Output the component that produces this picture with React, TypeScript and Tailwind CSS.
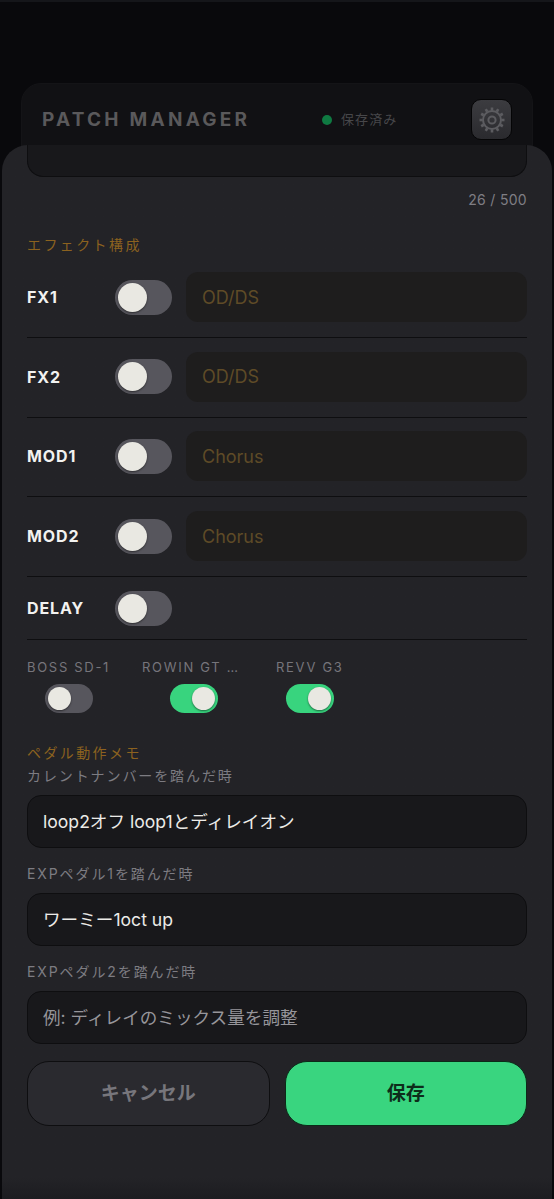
import React from 'react';

const FONT = "font-['Inter','Noto_Sans_CJK_JP',sans-serif]";

const Toggle = ({ on = false, small = false }: { on?: boolean; small?: boolean }) => (
  <div
    className={`flex items-center rounded-full ${small ? 'h-[29px] w-[48px] px-[3px]' : 'h-[35px] w-[57px] px-[3px]'} ${
      on ? 'justify-end bg-[#38d47e]' : 'justify-start bg-[#57565d]'
    }`}
  >
    <div
      className={`rounded-full bg-[#e9e8e2] shadow-[0_1px_2px_rgba(0,0,0,0.5)] ${small ? 'h-[23px] w-[23px]' : 'h-[29px] w-[29px]'}`}
    />
  </div>
);

const FxRow = ({ label, placeholder }: { label: string; placeholder: string }) => (
  <div className="mb-[13.7px] flex items-center border-b border-[#0e0e10] pb-[15px]">
    <span className="w-[88px] text-[16px] font-bold tracking-[0.9px] text-[#f2f2f0]">{label}</span>
    <Toggle />
    <div className="ml-[14px] flex h-[50px] flex-1 items-center rounded-[12px] bg-[#1e1d1d] px-[16px] text-[18px] text-[#5f4b27]">
      {placeholder}
    </div>
  </div>
);

const Pedal = ({ label, on, className }: { label: string; on?: boolean; className: string }) => (
  <div className={`flex flex-col items-center gap-[7px] ${className}`}>
    <span className="w-full whitespace-nowrap text-[13px] leading-[20px] tracking-[1.7px] text-[#76757b]">{label}</span>
    <Toggle small on={on} />
  </div>
);

const Memo = ({ label, value, muted }: { label: string; value: string; muted?: boolean }) => (
  <div className="flex flex-col">
    <span className="text-[14px] leading-[20px] tracking-[1.9px] text-[#7d7c82]">{label}</span>
    <div
      className={`mt-[9px] flex h-[53px] items-center rounded-[14px] border border-[#0e0e10] bg-[#18181b] px-[15px] text-[17.6px] ${
        muted ? 'text-[#96959a]' : 'text-[#ecebe8]'
      }`}
    >
      {value}
    </div>
  </div>
);

const TEETH = [0, 30, 60, 90, 120, 150, 180, 210, 240, 270, 300, 330];

const Gear = () => (
  <svg width="30" height="30" viewBox="0 0 30 30" fill="none" stroke="#5c5c60">
    <circle cx="15" cy="15" r="9" strokeWidth="2" />
    <circle cx="15" cy="15" r="3.6" strokeWidth="2" />
    {TEETH.map((deg) => (
      <line key={deg} x1="15" y1="5.5" x2="15" y2="2.5" strokeWidth="2.6" transform={`rotate(${deg} 15 15)`} />
    ))}
  </svg>
);

export default function App() {
  return (
    <div className={`relative h-[1199px] w-[554px] overflow-hidden bg-[#09090c] ${FONT}`}>
      <div className="h-[2px] bg-[#15161a]" />

      <div className="mx-[21px] mt-[81px] flex h-[100px] items-start rounded-[20px] border border-[#141417] bg-[#111114] pl-[20px] pr-[20px] pt-[15px]">
        <div className="flex h-[41px] flex-1 items-center">
          <span className="w-[280px] pt-[2px] text-[19px] font-bold tracking-[3.25px] text-[#5a595b]">PATCH MANAGER</span>
          <span className="h-[10px] w-[10px] rounded-full bg-[#0f7a42]" />
          <span className="ml-[9px] text-[13px] tracking-[1.1px] text-[#47474a]">保存済み</span>
        </div>
        <div className="flex h-[41px] w-[41px] items-center justify-center rounded-[10px] border border-[#050506] bg-gradient-to-b from-[#3c3c40] to-[#2a2a2e]">
          <Gear />
        </div>
      </div>

      {/* bottom sheet over the header */}
      <div className="absolute bottom-0 left-[2px] right-[2px] top-[145px] rounded-t-[26px] bg-gradient-to-b from-[#232327] from-[98%] to-[#1c1c20] px-[25px]">
        <div className="h-[32px] rounded-b-[16px] border border-t-0 border-[#0e0e10] bg-[#18181b]" />
        <div className="mt-[14px] text-right text-[14px] leading-[18px] tracking-[0.3px] text-[#7f7e84]">26 / 500</div>

        <div className="mt-[26px] text-[14px] leading-[20px] tracking-[2.4px] text-[#8c621f]">エフェクト構成</div>

        <div className="mt-[17px] flex flex-col">
          <FxRow label="FX1" placeholder="OD/DS" />
          <FxRow label="FX2" placeholder="OD/DS" />
          <FxRow label="MOD1" placeholder="Chorus" />
          <FxRow label="MOD2" placeholder="Chorus" />
          <div className="flex items-center border-b border-[#0e0e10] pb-[13.5px]">
            <span className="w-[88px] text-[16px] font-bold tracking-[0.9px] text-[#f2f2f0]">DELAY</span>
            <Toggle />
          </div>
        </div>

        <div className="mt-[17px] flex gap-[31px]">
          <Pedal label="BOSS SD-1" className="w-[84px]" />
          <Pedal label="ROWIN GT …" on className="w-[103px]" />
          <Pedal label="REVV G3" on className="w-[68px]" />
        </div>

        <div className="mt-[30px] text-[14px] leading-[20px] tracking-[2.4px] text-[#8c621f]">ペダル動作メモ</div>

        <div className="mt-[3px] flex flex-col gap-[16px]">
          <Memo label="カレントナンバーを踏んだ時" value="loop2オフ loop1とディレイオン" />
          <Memo label="EXPペダル1を踏んだ時" value="ワーミー1oct up" />
          <Memo label="EXPペダル2を踏んだ時" value="例: ディレイのミックス量を調整" muted />
        </div>

        <div className="mt-[17px] flex gap-[15px]">
          <button className="h-[65px] flex-1 rounded-[22px] border border-[#0e0e10] bg-[#2a2a2f] text-[19px] font-bold text-[#77767c]">
            キャンセル
          </button>
          <button className="h-[65px] flex-1 rounded-[22px] border border-[#0b2a18] bg-[#39d57f] text-[19px] font-bold text-[#0d2c1a]">
            保存
          </button>
        </div>
      </div>
    </div>
  );
}
